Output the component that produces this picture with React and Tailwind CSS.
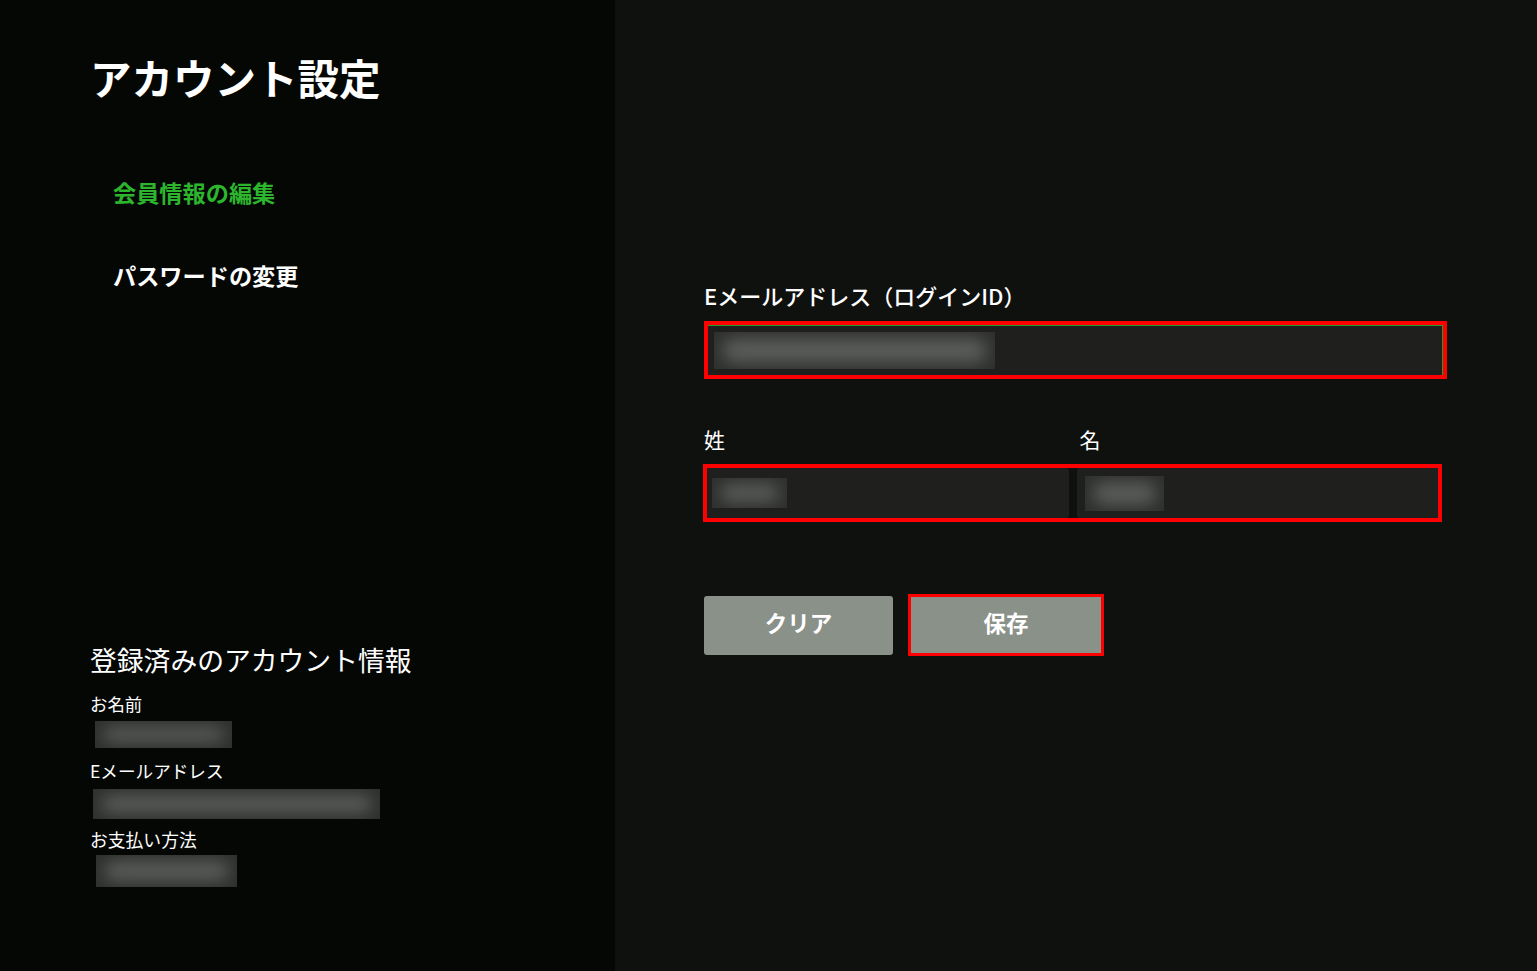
import React from "react";

const Blur = ({ className }) => (
  <div className={`relative overflow-hidden bg-[#2e302e] ${className}`}>
    <div className="absolute inset-x-[8px] inset-y-[6px] rounded-full bg-[#5a5c59] blur-[8px]" />
  </div>
);

const AccountSettings = () => {
  return (
    <div
      className="flex h-[971px] w-full text-white"
      style={{ fontFamily: '"Noto Sans CJK JP", "Noto Sans", sans-serif' }}
    >
      {/* Side menu */}
      <aside className="flex w-[615px] shrink-0 flex-col bg-[#050705] pl-[90px] pt-[47px]">
        <h1 className="text-[41.5px] font-bold leading-[60px]">アカウント設定</h1>

        <nav className="ml-[23px] flex flex-col">
          <a className="mt-[69px] text-[23.2px] font-bold leading-[32px] text-[#2db52d]">会員情報の編集</a>
          <a className="mt-[51px] text-[23.2px] font-bold leading-[32px]">パスワードの変更</a>
        </nav>

        {/* Registered info */}
        <div className="mt-[351px] flex flex-col">
          <h2 className="text-[26.8px] leading-[36px]">登録済みのアカウント情報</h2>
          <p className="mt-[14px] text-[17.4px] leading-[24px]">お名前</p>
          <Blur className="ml-[5px] mt-[5px] h-[27px] w-[137px]" />
          <p className="mt-[11px] text-[17.6px] leading-[24px]">Eメールアドレス</p>
          <Blur className="ml-[3px] mt-[6px] h-[30px] w-[287px]" />
          <p className="mt-[8px] text-[17.8px] leading-[24px]">お支払い方法</p>
          <Blur className="ml-[6px] mt-[4px] h-[32px] w-[141px]" />
        </div>
      </aside>

      {/* Form */}
      <main className="flex-1 bg-[#0f110f] pl-[89px] pt-[281px]">
        <form className="w-[743px]">
          <label className="block text-[22px] font-medium leading-[28px]">Eメールアドレス（ログインID）</label>
          <div className="mt-[12px] border-4 border-[#ff0000]">
            <div className="flex h-[50px] items-center border-r border-t border-[#2a9a2a] bg-[#1f201e] pl-[6px]">
              <Blur className="h-[37px] w-[281px]" />
            </div>
          </div>

          <div className="mt-[46px] grid w-[739px] grid-cols-2 gap-[8px]">
            <label className="text-[21px] leading-[28px]">姓</label>
            <label className="pl-[2px] text-[21px] leading-[28px]">名</label>
          </div>
          <div className="-ml-[1px] mt-[11px] grid w-[739px] grid-cols-2 gap-[8px] border-4 border-[#ff0000]">
            <div className="flex h-[50px] items-center rounded-r-[3px] bg-[#1f201e] pl-[5px]">
              <Blur className="h-[30px] w-[75px]" />
            </div>
            <div className="flex h-[50px] items-center rounded-l-[3px] bg-[#1f201e] pl-[8px]">
              <Blur className="h-[35px] w-[79px]" />
            </div>
          </div>

          <div className="mt-[72px] flex items-center gap-[15px]">
            <button
              type="button"
              className="h-[59px] w-[189px] rounded-[3px] bg-[#8a9189] pb-[6px] text-[22.5px] font-bold leading-[32px]"
            >
              クリア
            </button>
            <button
              type="submit"
              className="h-[62px] w-[196px] border-[3px] border-[#ff0000] bg-[#8a9189] pb-[6px] text-[22.5px] font-bold leading-[32px]"
            >
              保存
            </button>
          </div>
        </form>
      </main>
    </div>
  );
};

export default function App() {
  return <AccountSettings />;
}
